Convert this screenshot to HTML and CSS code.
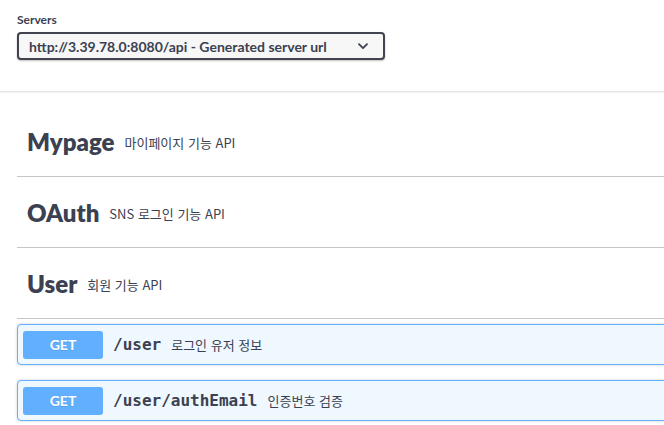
FILE: index.html
```html
<!DOCTYPE html>
<html lang="ko">
<head>
<meta charset="utf-8">
<title>Swagger UI</title>
<link rel="stylesheet" href="styles.css">
</head>
<body>
<div class="scheme-container">
  <div class="wrapper">
    <div class="servers-label">Servers</div>
    <div class="select">
      <span class="select-text">http://3.39.78.0:8080/api - Generated server url</span>
      <svg class="chev" width="10" height="7" viewBox="0 0 10 7"><path d="M1 1.2 L5 5.2 L9 1.2" fill="none" stroke="#3b4151" stroke-width="1.8" stroke-linecap="round" stroke-linejoin="round"/></svg>
    </div>
  </div>
</div>
<div class="wrapper tags">
  <div class="tag"><h3>Mypage</h3><small>마이페이지 기능 API</small></div>
  <div class="tag"><h3>OAuth</h3><small>SNS 로그인 기능 API</small></div>
  <div class="tag"><h3>User</h3><small>회원 기능 API</small></div>
  <div class="opblock">
    <span class="method">GET</span>
    <span class="path">/user</span>
    <span class="desc">로그인 유저 정보</span>
  </div>
  <div class="opblock">
    <span class="method">GET</span>
    <span class="path">/user/authEmail</span>
    <span class="desc">인증번호 검증</span>
  </div>
</div>
</body>
</html>
```
FILE: styles.css
```css
html, body {
  margin: 0;
  padding: 0;
  background: #fff;
  overflow: hidden;
}
body {
  font-family: "Lato", "Noto Sans CJK KR", sans-serif;
  color: #3b4151;
  width: 664px;
  height: 425px;
}
.wrapper {
  width: 1200px;
  padding-left: 17px;
  box-sizing: border-box;
}
.scheme-container {
  height: 91px;
  box-shadow: 0 1px 2px 0 rgba(0,0,0,.15);
  background: #fff;
  box-sizing: border-box;
  padding-top: 12px;
}
.servers-label {
  font-size: 12px;
  font-weight: 700;
  line-height: 16px;
  height: 16px;
}
.select {
  margin-top: 4px;
  width: 368px;
  height: 28px;
  box-sizing: border-box;
  border: 2px solid #41444e;
  border-radius: 4px;
  background: #f7f7f7;
  box-shadow: 0 1px 2px 0 rgba(0,0,0,.25);
  display: flex;
  align-items: center;
  padding: 0 15px 0 10px;
  justify-content: space-between;
}
.select-text {
  font-size: 14px;
  font-weight: 700;
  color: #3b4151;
  white-space: nowrap;
}
.chev { display: block; margin-top: 1px; }
.tags { padding-top: 20px; }
.tag {
  height: 66px;
  box-sizing: border-box;
  border-bottom: 1px solid rgba(59,65,81,.3);
  margin-bottom: 5px;
  padding-left: 10px;
  padding-bottom: 3px;
  display: flex;
  align-items: center;
}
.tag h3 {
  margin: 0;
  font-size: 24px;
  font-weight: 800;
  color: #3b4151;
  line-height: 30px;
}
.tag small {
  font-size: 13px;
  margin-left: 10px;
  color: #3b4151;
  font-family: "Noto Sans CJK KR", "Lato", sans-serif;
}
.opblock {
  height: 41px;
  box-sizing: border-box;
  border: 1px solid #61affe;
  border-radius: 4px;
  background: #eff7ff;
  box-shadow: 0 0 3px rgba(0,0,0,.19);
  margin-bottom: 15px;
  padding: 5px;
  display: flex;
  align-items: center;
}
.method {
  width: 80px;
  height: 28px;
  border-radius: 3px;
  background: #61affe;
  color: #fff;
  font-size: 14px;
  font-weight: 700;
  display: flex;
  align-items: center;
  justify-content: center;
  text-shadow: 0 1px 0 rgba(0,0,0,.1);
}
.path {
  margin-left: 10px;
  font-family: "DejaVu Sans Mono", monospace;
  font-weight: 700;
  font-size: 16px;
  color: #3b4151;
}
.desc {
  margin-left: 10px;
  font-size: 13px;
  color: #3b4151;
  font-family: "Noto Sans CJK KR", "Lato", sans-serif;
}
```
